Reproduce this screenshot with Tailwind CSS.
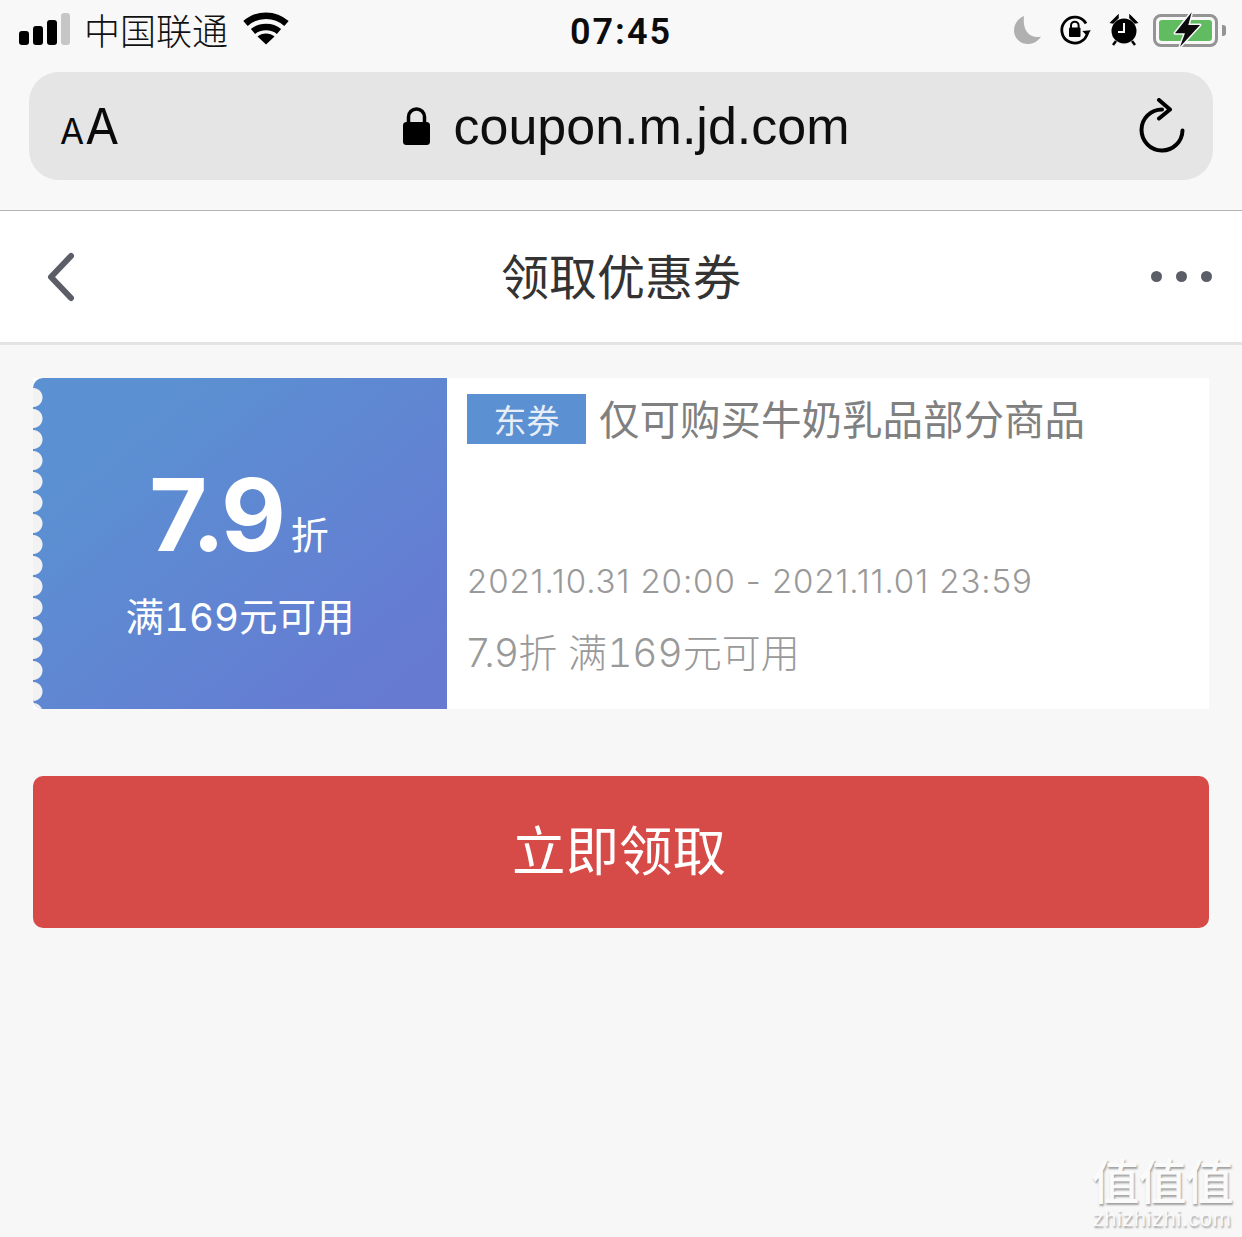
<!DOCTYPE html>
<html lang="zh-CN">
<head>
  <meta charset="UTF-8">
  <title>领取优惠券</title>
  <script src="https://cdn.jsdelivr.net/npm/@tailwindcss/browser@4"></script>
</head>
<body class="relative w-[1242px] h-[1237px] overflow-hidden bg-[#f7f7f7] font-['Inter','Noto_Sans_CJK_SC',sans-serif]">

  <!-- Browser chrome -->
  <header class="h-[211px] bg-[#f8f8f8] border-b border-[#b4b4b4]">
    <!-- Status bar -->
    <div class="relative h-[72px] flex items-start justify-between pl-[19px] pr-[16px] pt-[11px]">
      <div class="flex items-center">
        <div class="flex items-end gap-[4px] h-[32px] mb-[2px]">
          <span class="w-[10px] h-[14px] rounded-[3px] bg-black"></span>
          <span class="w-[10px] h-[19px] rounded-[3px] bg-black"></span>
          <span class="w-[10px] h-[25px] rounded-[3px] bg-black"></span>
          <span class="w-[9px] h-[32px] rounded-[3px] bg-[#c6c6c6]"></span>
        </div>
        <span class="ml-[14px] mt-[-3px] text-[36px] leading-[40px] text-[#111] font-['Noto_Sans_CJK_SC',sans-serif] font-light">中国联通</span>
        <svg class="ml-[15px] mb-[4px]" width="46" height="34" viewBox="0 0 46 34" fill="none">
          <path d="M2.500 12.500C14 2 32 2 43.500 12.500" stroke="#000" stroke-width="6.500"/>
          <path d="M10 20.500C17 14.500 29 14.500 36 20.500" stroke="#000" stroke-width="6.500"/>
          <path d="M23 33.500L14.500 25.500C19 21.500 27 21.500 31.500 25.500Z" fill="#000"/>
        </svg>
      </div>
      <span class="absolute left-0 right-0 top-[11px] text-center text-[36px] leading-[42px] font-semibold text-[#0c0c0c] font-['Roboto',sans-serif] tracking-[2px]">07:45</span>
      <div class="flex items-center gap-[17px] pt-[2px]">
        <svg width="30" height="30" viewBox="0 0 30 30"><path d="M11 1C4.500 4 1 9 1 15.500 1 23 7 29 14.500 29 20 29 25 26.500 28 21.500 19 24 9 18 11 1Z" fill="#b0b0b0"/></svg>
        <svg width="32" height="30" viewBox="0 0 32 30" fill="none">
          <path d="M26 8.500A13 13 0 1 0 27.500 18" stroke="#000" stroke-width="2.800"/>
          <path d="M22.500 15.500H31L27 21Z" fill="#000" transform="rotate(-5 27 18)"/>
          <path d="M11 13V10.500a3.800 3.800 0 0 1 7.600 0V13" stroke="#000" stroke-width="2"/>
          <rect x="9" y="12.500" width="11.500" height="9.500" rx="1" fill="#000"/>
        </svg>
        <svg width="30" height="32" viewBox="0 0 30 32">
          <circle cx="15" cy="17" r="12.500" fill="#000"/>
          <path d="M2 8.500L9 1.500 9 4 4 9ZM28 8.500L21 1.500 21 4 26 9Z" fill="#000" stroke="#000" stroke-width="1.500"/>
          <path d="M7 27L4 31M23 27L26 31" stroke="#000" stroke-width="2.500"/>
          <path d="M15 9V18H9" stroke="#f8f8f8" stroke-width="2" fill="none"/>
        </svg>
        <div class="relative flex items-center w-[73px] h-[34px] ml-[-3px]">
          <div class="w-[65px] h-[33px] rounded-[8px] border-[3px] border-[#949494] p-[3px]">
            <div class="w-full h-full rounded-[3px] bg-[#60bb61]"></div>
          </div>
          <span class="ml-[4px] w-[4px] h-[11px] rounded-r-[3px] bg-[#949494]"></span>
          <svg class="absolute left-[17px] top-[-3px]" width="36" height="40" viewBox="0 0 36 40">
            <path d="M21.700 2.300L5 23.300H15L10 36.700 30 15H18.300Z" fill="#0b0b0b" stroke="#f8f8f8" stroke-width="3" stroke-linejoin="round" paint-order="stroke"/>
          </svg>
        </div>
      </div>
    </div>
    <!-- Address bar -->
    <div class="mx-[29px] h-[108px] rounded-[30px] bg-[#e5e5e5] flex items-center justify-between pl-[31px] pr-[28px]">
      <div class="flex items-baseline font-['Inter',sans-serif] text-[#0a0a0a] w-[130px] pt-[8px]">
        <span class="text-[35px]">A</span><span class="text-[49px] ml-[1px] leading-none">A</span>
      </div>
      <div class="flex items-center gap-[23px] ml-[6px]">
        <svg width="29" height="40" viewBox="0 0 29 40" fill="none">
          <path d="M6.500 18V11a8 8 0 0 1 16 0V18" stroke="#000" stroke-width="3.500"/>
          <rect x="1" y="16" width="27" height="23" rx="3.500" fill="#000"/>
        </svg>
        <span class="text-[52px] leading-[60px] text-[#0e0e0e] font-['Liberation_Sans',sans-serif]">coupon.m.jd.com</span>
      </div>
      <div class="w-[130px] flex justify-end">
        <svg width="46" height="56" viewBox="0 0 46 56" fill="none" stroke="#000" stroke-width="4" stroke-linecap="round" stroke-linejoin="round">
          <path d="M23 11.500A20.500 20.500 0 1 0 43.500 32.500"/>
          <path d="M20 2L31 11.500 20 20.500"/>
        </svg>
      </div>
    </div>
  </header>

  <!-- Page nav -->
  <nav class="h-[134px] bg-white border-b-[3px] border-[#e4e4e4] flex items-center justify-between pl-[47px] pr-[30px]">
    <svg width="28" height="50" viewBox="0 0 28 50" fill="none" stroke="#5b5d67" stroke-width="6" stroke-linecap="round" stroke-linejoin="round">
      <path d="M24 4L4 25 24 46"/>
    </svg>
    <h1 class="text-[48px] leading-[60px] pb-[5px] text-[#333] font-normal font-['Noto_Sans_CJK_SC',sans-serif] ml-[16px]">领取优惠券</h1>
    <div class="flex gap-[14px]">
      <span class="w-[11px] h-[11px] rounded-full bg-[#5b5d67]"></span>
      <span class="w-[11px] h-[11px] rounded-full bg-[#5b5d67]"></span>
      <span class="w-[11px] h-[11px] rounded-full bg-[#5b5d67]"></span>
    </div>
  </nav>

  <main class="px-[33px] pt-[33px]">
    <!-- Coupon -->
    <section class="flex h-[331px] bg-white">
      <div class="relative w-[414px] rounded-l-[10px] overflow-hidden bg-linear-[140deg] from-[#5b90d2] from-20% to-[#667ad2] to-90% flex flex-col items-center text-white font-['Inter','Noto_Sans_CJK_SC',sans-serif]">
        <div class="absolute left-0 top-[9px] bottom-0 w-[10px] bg-[radial-gradient(circle_at_0_50%,#f2f2f2_9px,transparent_10px)] bg-size-[10px_21px]"></div>
        <div class="flex items-baseline mt-[82px] ml-[-2px] h-[112px]">
          <span class="text-[100px] leading-[110px] font-bold tracking-[-3px]">7.9</span>
          <span class="text-[38px] leading-[40px] ml-[8px] -translate-y-[2px] font-['Noto_Sans_CJK_SC',sans-serif]">折</span>
        </div>
        <p class="mt-[20px] text-[38.500px] leading-[50px] tabular-nums">满169元可用</p>
      </div>
      <div class="flex-1 pl-[20px] pt-[16px] font-['Inter','Noto_Sans_CJK_SC',sans-serif] text-[#888]">
        <div class="flex items-start">
          <span class="w-[119px] h-[50px] bg-[#5b90d2] text-[#e8eef8] text-[33px] leading-[50px] text-center font-['Noto_Sans_CJK_SC',sans-serif]">东券</span>
          <span class="ml-[13px] mt-[-3px] text-[#808080] text-[40.500px] leading-[54px] font-['Noto_Sans_CJK_SC',sans-serif]">仅可购买牛奶乳品部分商品</span>
        </div>
        <p class="mt-[114px] text-[33px] leading-[44px] text-[#999] font-light tracking-[0.900px]">2021.10.31 20:00 - 2021.11.01 23:59</p>
        <p class="mt-[24px] text-[39px] leading-[52px] text-[#999] font-light">7.9折 满<span class="tabular-nums">169</span>元可用</p>
      </div>
    </section>

    <!-- Claim button -->
    <button class="mt-[67px] w-full h-[152px] pb-[8px] pr-[4px] rounded-[10px] bg-[#d64b47] text-white text-[53.500px] font-['Noto_Sans_CJK_SC',sans-serif]">立即领取</button>
  </main>

  <!-- Watermark -->
  <div class="absolute left-[1088px] top-[1150px] w-[148px] text-center text-[#fafafa] [text-shadow:1px_2px_2px_rgba(0,0,0,0.35)] font-['Noto_Sans_CJK_SC',sans-serif]">
    <div class="text-[48px] leading-[56px] tracking-[-1px] font-medium">值值值</div>
    <div class="text-[22px] leading-[26px] font-['Liberation_Sans',sans-serif] tracking-[0.500px]">zhizhizhi.com</div>
  </div>
</body>
</html>
